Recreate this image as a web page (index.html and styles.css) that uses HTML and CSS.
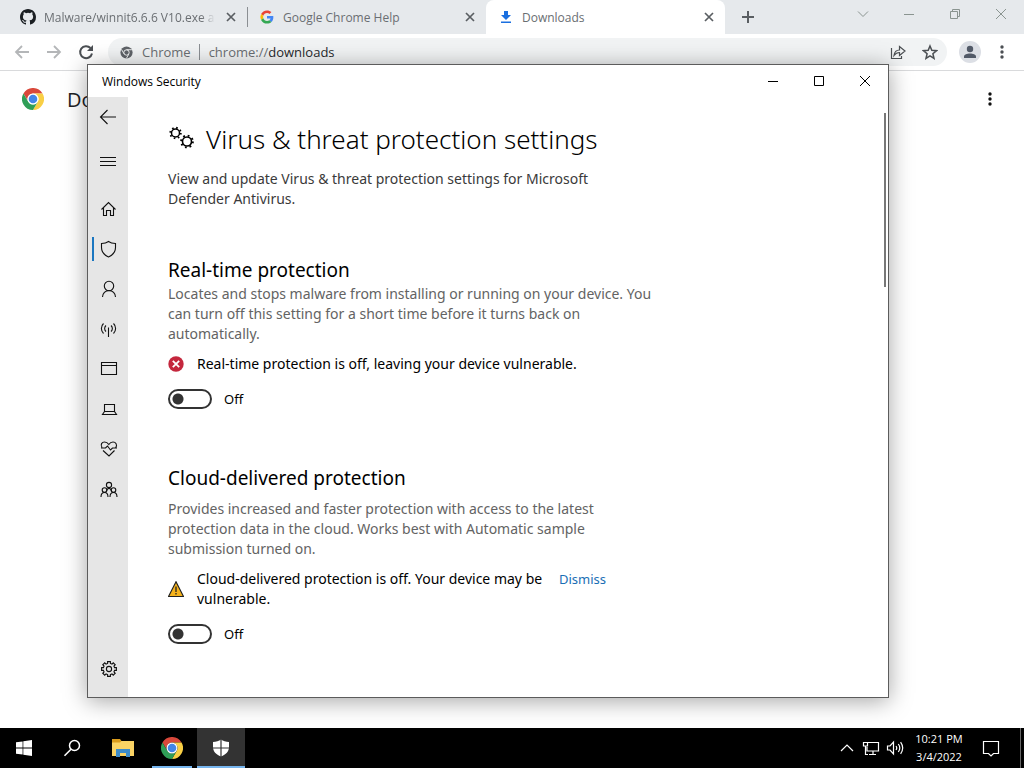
FILE: index.html
```html
<!DOCTYPE html>
<html lang="en">
<head>
<meta charset="utf-8">
<title>Downloads</title>
<link rel="stylesheet" href="styles.css">
</head>
<body>
<svg class="defs" aria-hidden="true">
  <symbol id="chrome" viewBox="0 0 48 48">
    <path fill="#d9483b" d="M24 12H44.8A24 24 0 0 0 3.2 12L13.6 30A12 12 0 0 1 24 12Z"/>
    <path fill="#f9cf45" d="M44.8 12A24 24 0 0 1 24 48L34.4 30A12 12 0 0 0 24 12Z"/>
    <path fill="#2f9e57" d="M3.2 12A24 24 0 0 0 24 48L34.4 30A12 12 0 0 1 13.6 30Z"/>
    <circle cx="24" cy="24" r="12" fill="#fff"/><circle cx="24" cy="24" r="9.4" fill="#4285e8"/>
  </symbol>
  <symbol id="x" viewBox="0 0 16 16"><path d="M4 4l8 8M12 4l-8 8" fill="none" stroke="currentColor" stroke-width="1.7"/></symbol>
  <symbol id="dots" viewBox="0 0 16 16"><g fill="currentColor" stroke="none"><circle cx="8" cy="3" r="1.7"/><circle cx="8" cy="8" r="1.7"/><circle cx="8" cy="13" r="1.7"/></g></symbol>
</svg>
<div class="desktop">
  <div class="browser">
    <div class="tabstrip">
      <div class="tab">
        <svg class="i16" viewBox="0 0 16 16"><path fill="#1b1f23" d="M8 0C3.58 0 0 3.58 0 8c0 3.54 2.29 6.53 5.47 7.59.4.07.55-.17.55-.38 0-.19-.01-.82-.01-1.49-2.01.37-2.53-.49-2.69-.94-.09-.23-.48-.94-.82-1.13-.28-.15-.68-.52-.01-.53.63-.01 1.08.58 1.23.82.72 1.21 1.87.87 2.33.66.07-.52.28-.87.51-1.07-1.78-.2-3.64-.89-3.64-3.95 0-.87.31-1.59.82-2.15-.08-.2-.36-1.02.08-2.12 0 0 .67-.21 2.2.82a7.6 7.6 0 0 1 4 0c1.53-1.04 2.2-.82 2.2-.82.44 1.1.16 1.92.08 2.12.51.56.82 1.27.82 2.15 0 3.07-1.87 3.75-3.65 3.95.29.25.54.73.54 1.48 0 1.07-.01 1.93-.01 2.2 0 .21.15.46.55.38A8 8 0 0 0 16 8c0-4.42-3.58-8-8-8z"/></svg>
        <span class="tab-title fade">Malware/winnit6.6.6 V10.exe at r</span>
        <button class="tab-x" aria-label="Close tab"><svg class="i16"><use href="#x"/></svg></button>
      </div>
      <div class="tab divided">
        <svg class="i16" viewBox="-5 -5 58 58"><path fill="#ea4335" d="M24 9.5c3.54 0 6.71 1.22 9.21 3.6l6.85-6.85C35.9 2.38 30.47 0 24 0 14.62 0 6.51 5.38 2.56 13.22l7.98 6.19C12.43 13.72 17.74 9.5 24 9.5z"/><path fill="#4285f4" d="M46.98 24.55c0-1.57-.15-3.09-.38-4.55H24v9.02h12.94c-.58 2.96-2.26 5.48-4.78 7.18l7.73 6c4.51-4.18 7.09-10.36 7.09-17.65z"/><path fill="#fbbc05" d="M10.53 28.59a14.5 14.5 0 0 1 0-9.18l-7.98-6.19a24 24 0 0 0 0 21.56z"/><path fill="#34a853" d="M24 48c6.48 0 11.93-2.13 15.89-5.81l-7.73-6c-2.15 1.45-4.92 2.3-8.16 2.3-6.26 0-11.57-4.22-13.47-9.91l-7.98 6.19C6.51 42.62 14.62 48 24 48z"/></svg>
        <span class="tab-title">Google Chrome Help</span>
        <button class="tab-x" aria-label="Close tab"><svg class="i16"><use href="#x"/></svg></button>
      </div>
      <div class="tab active">
        <svg class="i16" viewBox="0 0 16 16"><path fill="#1a6fe0" d="M6 2h4v4h3L8 11 3 6h3zM3 12.5h10V14H3z"/></svg>
        <span class="tab-title">Downloads</span>
        <button class="tab-x" aria-label="Close tab"><svg class="i16"><use href="#x"/></svg></button>
      </div>
      <button class="new-tab" aria-label="New tab"><svg class="i16" viewBox="0 0 16 16"><path d="M8 2v12M2 8h12" stroke="#5a5e62" stroke-width="2"/></svg></button>
      <div class="win-controls pale">
        <button aria-label="Search tabs"><svg class="i16" viewBox="0 0 16 16"><path d="M3 5.500l5 5 5-5"/></svg></button>
        <button aria-label="Minimize"><svg class="i16" viewBox="0 0 16 16"><path d="M3 8.500h10"/></svg></button>
        <button aria-label="Restore"><svg class="i16" viewBox="0 0 16 16"><path d="M3.500 5.500h7v7h-7zM5.500 5.500v-2h7v7h-2"/></svg></button>
        <button aria-label="Close"><svg class="i16" viewBox="0 0 16 16"><path d="M3 3l10 10M13 3L3 13"/></svg></button>
      </div>
    </div>
    <div class="toolbar">
      <button class="nav dim" aria-label="Back"><svg class="i16" viewBox="0 0 16 16"><path d="M15 8H2M8 2L2 8l6 6"/></svg></button>
      <button class="nav dim" aria-label="Forward"><svg class="i16" viewBox="0 0 16 16"><path d="M1 8h13M8 2l6 6-6 6"/></svg></button>
      <button class="nav" aria-label="Reload"><svg class="i16" viewBox="0 0 16 16"><path stroke-width="2" d="M12.500 4A6 6 0 1 0 14 9.500"/><path fill="#4b4f53" stroke="none" d="M15 1v6H9z"/></svg></button>
      <div class="omnibox">
        <svg class="site" viewBox="0 0 16 16"><circle cx="8" cy="8" r="7.500" fill="#5f6368"/><circle cx="8" cy="8" r="3.300" fill="none" stroke="#f1f3f4" stroke-width="1.200"/><path d="M8 4.600h6.500M5 9.700L1.900 4.300M11 9.700l-3.200 5.600" stroke="#f1f3f4" stroke-width="1.200"/></svg>
        <span class="site-name">Chrome</span>
        <span class="url">chrome://<b>downloads</b></span>
        <button class="nav" aria-label="Share"><svg class="i16" viewBox="0 0 16 16"><path stroke-width="1.200" d="M1.500 4v10.500h10V12M4 11.500c.5-4 2.500-5.500 5.500-5.500V2.500L15 7l-5.500 4.500V8.500C7 8.500 5.500 9.500 4 11.500z"/></svg></button>
        <button class="nav" aria-label="Bookmark"><svg class="i16" viewBox="0 0 16 16"><path stroke-width="1.500" d="M8 2l1.800 4.300 4.700.4-3.600 3 1.100 4.600L8 11.800l-4 2.500 1.100-4.600-3.600-3 4.700-.4z"/></svg></button>
      </div>
      <button class="profile" aria-label="Profile"><svg class="i16" viewBox="0 0 16 16"><circle cx="8" cy="5" r="3.200" fill="#525a68"/><path fill="#525a68" d="M2 14v-1.500C2 10.500 5 9.500 8 9.500s6 1 6 3V14z"/></svg></button>
      <button class="nav" aria-label="Menu"><svg class="i16"><use href="#dots"/></svg></button>
    </div>
    <div class="page">
      <svg class="logo"><use href="#chrome"/></svg>
      <h1 class="page-title">Downloads</h1>
      <button class="nav black" aria-label="More actions"><svg class="i16"><use href="#dots"/></svg></button>
    </div>
  </div>

  <div class="security">
    <div class="titlebar">
      <span>Windows Security</span>
      <div class="win-controls">
        <button aria-label="Minimize"><svg class="i16" viewBox="0 0 16 16"><path d="M3 8.500h10"/></svg></button>
        <button aria-label="Maximize"><svg class="i16" viewBox="0 0 16 16"><path d="M3.500 3.500h9v9h-9z"/></svg></button>
        <button aria-label="Close"><svg class="i16" viewBox="0 0 16 16"><path d="M3 3l10 10M13 3L3 13"/></svg></button>
      </div>
    </div>
    <div class="body">
      <nav class="rail">
        <button aria-label="Back"><svg viewBox="0 0 20 20"><path d="M18 10H2.500M9.500 3l-7 7 7 7"/></svg></button>
        <button class="menu" aria-label="Menu"><svg viewBox="0 0 20 20"><path d="M2 5.500h16M2 9.500h16M2 13.500h16"/></svg></button>
        <button aria-label="Home"><svg viewBox="0 0 20 20"><path d="M5.500 9v7.500h3v-5h4v5h3V9M3.500 10.500l7-7 7 7"/></svg></button>
        <button class="current" aria-label="Virus and threat protection"><svg viewBox="0 0 20 20"><path d="M10.500 2.500c2 1.500 4.500 2 7 2v4c0 4.500-2.500 7.500-7 9.500-4.500-2-7-5-7-9.500v-4c2.500 0 5-.5 7-2z"/></svg></button>
        <button aria-label="Account protection"><svg viewBox="0 0 20 20"><circle cx="11" cy="7" r="4.700"/><path d="M4.500 18a6.500 6.500 0 0 1 13 0"/></svg></button>
        <button aria-label="Firewall and network protection"><svg viewBox="0 0 20 20"><path d="M10.500 8.500V18M8 12.500a4 4 0 0 1 0-6M13 12.500a4 4 0 0 0 0-6M5.500 14.500a7 7 0 0 1 0-10M15.500 14.500a7 7 0 0 0 0-10"/></svg></button>
        <button aria-label="App and browser control"><svg viewBox="0 0 20 20"><path d="M3.500 3.500h15v12h-15zM3.500 6.500h15"/></svg></button>
        <button aria-label="Device security"><svg viewBox="0 0 20 20"><path d="M6.500 5.500h10v7h-10zM6.500 12.500l-2 3h14l-2-3"/></svg></button>
        <button aria-label="Device performance and health"><svg viewBox="0 0 20 20"><path d="M4 8.500C2 5.500 4 3 6.500 3c2 0 3.300 1 4.300 2.500C11.800 4 13 3 15 3c2.500 0 5 2.500 2.500 6M5 11.500l6 5.500 5.500-5.500M3 9h4.500l2-2 3 4 2-2H19"/></svg></button>
        <button aria-label="Family options"><svg viewBox="0 0 20 20"><circle cx="11" cy="6" r="2.600"/><circle cx="6.500" cy="11" r="2.300"/><circle cx="15.500" cy="11" r="2.300"/><path d="M3 18c0-6 7-6 7 0M12 18c0-6 7-6 7 0M8.500 12c1-3.500 4-3.500 5 0"/></svg></button>
        <button class="settings" aria-label="Settings"><svg viewBox="-11 -10 20 20"><path d="M-1.400-5.600L-1.400-7.400 1.400-7.400 1.400-5.600 2.970-4.950 4.240-6.220 6.220-4.240 4.950-2.970 5.600-1.400 7.400-1.400 7.400 1.400 5.600 1.400 4.950 2.970 6.220 4.240 4.240 6.220 2.970 4.950 1.400 5.600 1.400 7.400-1.400 7.400-1.400 5.600-2.970 4.950-4.240 6.220-6.220 4.240-4.950 2.970-5.600 1.400-7.400 1.400-7.400-1.400-5.600-1.400-4.950-2.970-6.220-4.240-4.240-6.220-2.970-4.950Z"/><circle r="2.600"/></svg></button>
      </nav>
      <main class="content">
        <header class="heading">
          <svg viewBox="0 0 28 28"><g fill="none" stroke="#000"><circle cx="7.500" cy="8" r="4" stroke-width="1.500"/><circle cx="7.500" cy="8" r="5.300" stroke-width="1.800" stroke-dasharray="1.600 2.563"/><circle cx="19" cy="16.500" r="4.500" stroke-width="1.600"/><circle cx="19" cy="16.500" r="5.900" stroke-width="1.900" stroke-dasharray="1.800 2.834"/></g></svg>
          <h1>Virus &amp; threat protection settings</h1>
        </header>
        <p class="intro">View and update Virus &amp; threat protection settings for Microsoft Defender Antivirus.</p>
        <section>
          <h2>Real-time protection</h2>
          <p class="desc">Locates and stops malware from installing or running on your device. You can turn off this setting for a short time before it turns back on automatically.</p>
          <div class="status">
            <svg class="i16" viewBox="0 0 16 16"><circle cx="8" cy="8" r="7.700" fill="#c4273d"/><path d="M4.800 4.800l6.400 6.400M11.200 4.800l-6.400 6.400" stroke="#fff" stroke-width="1.800"/></svg>
            <span>Real-time protection is off, leaving your device vulnerable.</span>
          </div>
          <label class="switch"><input type="checkbox" role="switch"><span>Off</span></label>
        </section>
        <section class="cloud">
          <h2>Cloud-delivered protection</h2>
          <p class="desc">Provides increased and faster protection with access to the latest protection data in the cloud. Works best with Automatic sample submission turned on.</p>
          <div class="status">
            <svg class="i16" viewBox="0 0 16 16"><path d="M8 .8L15.500 15.500H.5z" fill="#f5b21b" stroke="#222" stroke-width="1.200"/><path d="M8 5.500v5.500M8 12v1.500" stroke="#222" stroke-width="1.300"/></svg>
            <span class="warn">Cloud-delivered protection is off. Your device may be vulnerable.</span>
            <a href="#dismiss">Dismiss</a>
          </div>
          <label class="switch"><input type="checkbox" role="switch"><span>Off</span></label>
        </section>
        <div class="thumb"></div>
      </main>
    </div>
  </div>

  <div class="taskbar">
    <button aria-label="Start"><svg class="i16" viewBox="0 0 16 16"><path fill="#fff" d="M0 2.300l6.600-.9v6.200H0zM7.300 1.300L16 0v7.600H7.300zM0 8.400h6.600v6.200L0 13.700zM7.300 8.400H16V16l-8.700-1.300z"/></svg></button>
    <button aria-label="Search"><svg class="i18" viewBox="0 0 18 18"><g fill="none" stroke="#fff" stroke-width="1.500"><circle cx="11.500" cy="6.500" r="5"/><path d="M8 10.200L1.500 16.800"/></g></svg></button>
    <button class="app" aria-label="File Explorer"><svg class="i22" viewBox="0 0 22 22"><path fill="#d99b1c" d="M0 2h8l1.500 2H21v4H0z"/><path fill="#fad364" d="M0 5.500h8L9.500 4H22v15H0z"/><path fill="#3d8bc8" d="M4 12h14v8h-4v-4H8v4H4z"/></svg></button>
    <button class="app open" aria-label="Google Chrome"><svg class="i22"><use href="#chrome"/></svg></button>
    <button class="app open focused" aria-label="Windows Security"><svg class="i18" viewBox="0 0 18 18"><path fill="#fff" d="M9 .5C11 2 14 2.800 17 3v5c0 4.500-3 7.500-8 9.500C4 15.500 1 12.500 1 8V3c3-.2 6-1 8-2.500z"/><path d="M9 0v18M0 9h18" stroke="#333" stroke-width="1.200"/></svg></button>
    <div class="tray">
      <button aria-label="Show hidden icons"><svg class="i18" viewBox="0 0 18 18"><path d="M3 12l6-6 6 6"/></svg></button>
      <button aria-label="Network"><svg class="i18" viewBox="0 0 18 18"><path d="M6 3.500h10.500v8.500H5V8M11 12v3.500M7 15.500h7M1.500 3.500h4V7h-4zM3.500 7v8.500H6"/></svg></button>
      <button aria-label="Volume"><svg class="i18" viewBox="0 0 18 18"><path d="M1.500 7h2.500l3.500-4v12L4 11H1.500zM10 7q1.500 2 0 4M12.300 5q3 4 0 8M14.600 3.200q4.200 5.800 0 11.600"/></svg></button>
      <time class="clock"><span>10:21 PM</span><span>3/4/2022</span></time>
      <button class="notes" aria-label="Notifications"><svg class="i18" viewBox="0 0 18 18"><path d="M1.500 2.500h15v12h-5L9 17l-2.500-2.500h-5z"/></svg></button>
      <span class="peek"></span>
    </div>
  </div>
</div>
</body>
</html>
```
FILE: styles.css
```css
* { box-sizing: border-box; }
body { margin: 0; font-family: "Noto Sans", "Open Sans", sans-serif; font-size: 14px; color: #000; }
h1, h2, p { margin: 0; font-weight: 400; }
button { display: flex; align-items: center; justify-content: center; padding: 0; border: 0; background: none; color: inherit; font: inherit; }
svg { display: block; flex: none; }
.defs { position: absolute; width: 0; height: 0; }
.i16 { width: 16px; height: 16px; }
.i18 { width: 18px; height: 18px; }
.i22 { width: 22px; height: 22px; }

.desktop { position: relative; display: flex; flex-direction: column; min-height: 100vh; overflow: hidden; background: #fff; }
.browser { flex: 1; font-family: "Open Sans", "Noto Sans", sans-serif; }

.tabstrip { display: flex; height: 34px; padding-left: 8px; background: #e6e9ec; color: #6a6e72; }
.tab { display: flex; flex: 0 1 239px; min-width: 0; align-items: center; gap: 8px; padding: 0 8px 0 12px; font-size: 12px; }
.tab.divided { background: linear-gradient(#8b8f93, #8b8f93) 0 50% / 1px 20px no-repeat; }
.tab.active { background: #fff; border-radius: 8px 8px 0 0; }
.tab-title { flex: 1; overflow: hidden; white-space: nowrap; }
.fade { mask-image: linear-gradient(to right, #000 92%, transparent); }
.tab-x { width: 16px; height: 16px; color: #5a5e62; }
.new-tab { width: 46px; }
.win-controls { display: flex; margin-left: auto; }
.win-controls button { width: 46px; height: 28px; }
.win-controls path { fill: none; stroke: #000; }
.pale path { stroke: #8a9490; }

.toolbar { display: flex; align-items: center; height: 37px; padding: 0 6px; border-bottom: 1px solid #d9dadc; }
.nav { width: 32px; height: 32px; color: #4b4f53; }
.nav svg { fill: none; stroke: #4b4f53; stroke-width: 1.8; }
.dim svg { stroke: #b4b6b8; }
.black { color: #111; margin-left: auto; }
.omnibox { display: flex; flex: 1; align-items: center; height: 28px; margin: 0 12px 0 6px; padding: 0 1px 0 12px; border-radius: 14px; background: #f1f3f4; color: #6a6e72; font-size: 13px; }
.site { width: 13px; height: 13px; margin-right: 9px; }
.site-name { padding-right: 8px; border-right: 1px solid #8b8f93; line-height: 16px; }
.url { flex: 1; padding-left: 9px; }
.url b { font-weight: 400; color: #27292c; }
.profile { width: 22px; height: 22px; margin-right: 5px; border-radius: 50%; background: #dcdfe5; }
.page { display: flex; align-items: center; height: 56px; padding: 0 18px 0 22px; }
.logo { width: 22px; height: 22px; }
.page-title { margin-left: 23px; font-size: 20px; font-weight: 500; color: #202124; }

.security { position: absolute; inset: 64px 135px 70px 87px; display: flex; flex-direction: column; border: 1px solid #5c5c5c; background: #fff; box-shadow: 0 3px 22px rgba(0, 0, 0, .36); }
.titlebar { display: flex; align-items: center; height: 32px; padding-left: 14px; font-family: "Open Sans", "Noto Sans", sans-serif; font-size: 12px; }
.body { display: flex; flex: 1; min-height: 0; }
.rail { display: flex; flex-direction: column; width: 40px; padding-bottom: 8px; background: #e6e6e6; }
.rail button { width: 40px; height: 40px; }
.rail svg { width: 20px; height: 20px; fill: none; stroke: #111; stroke-width: 1.1; }
.rail .menu { margin: 5px 0 7px; }
.rail .current { background: linear-gradient(#1a76c0, #1a76c0) 4px 50% / 2px 24px no-repeat; }
.rail .settings { margin-top: auto; }

.content { position: relative; flex: 1; padding: 24px 40px 0; line-height: 20px; }
.heading { display: flex; align-items: center; gap: 10px; }
.heading svg { width: 28px; height: 28px; }
.heading h1 { font-size: 26px; font-weight: 300; line-height: 36px; white-space: nowrap; }
.intro { max-width: 450px; margin: 12px 0 48px; color: #3a3a3a; }
h2 { font-size: 19px; line-height: 27px; }
.desc { max-width: 500px; color: #636363; }
.cloud { margin-top: 56px; }
.cloud .desc { max-width: 450px; margin-top: 7px; }
.status { display: flex; align-items: center; gap: 12px; margin: 10px 0 15px; }
.status > span { margin-left: 1px; }
.status .warn { width: 352px; margin-right: -2px; }
.status a { align-self: flex-start; font-size: 13px; color: #1a6fb5; text-decoration: none; }
.switch { display: flex; align-items: center; gap: 12px; width: max-content; font-size: 13px; }
.switch input { width: 44px; height: 20px; margin: 0; appearance: none; border: 2px solid #333; border-radius: 10px; background: radial-gradient(circle at 8px 8px, #333 5px, transparent 6px); }
.thumb { position: absolute; top: 16px; right: 2px; width: 2px; height: 174px; background: #777; }

.taskbar { display: flex; height: 40px; background: #000; color: #fff; }
.taskbar > button { width: 48px; }
.taskbar .app { margin-left: 1px; }
.taskbar .app:nth-child(3) { margin-left: 3px; }
.open { background: linear-gradient(#76b5ee, #76b5ee) 50% 100% / 40px 2px no-repeat; }
.focused { background: linear-gradient(#76b5ee, #76b5ee) 50% 100% / 48px 2px no-repeat #333; }
.tray { display: flex; margin-left: auto; }
.tray button { width: 24px; }
.tray path { fill: none; stroke: #fff; stroke-width: 1.2; }
.clock { display: flex; flex-direction: column; justify-content: center; width: 64px; font-family: "Open Sans", "Noto Sans", sans-serif; font-size: 11px; line-height: 18px; text-align: center; }
.tray .notes { width: 40px; }
.peek { width: 4px; margin-left: 9px; border-left: 1px solid #666; }
```
